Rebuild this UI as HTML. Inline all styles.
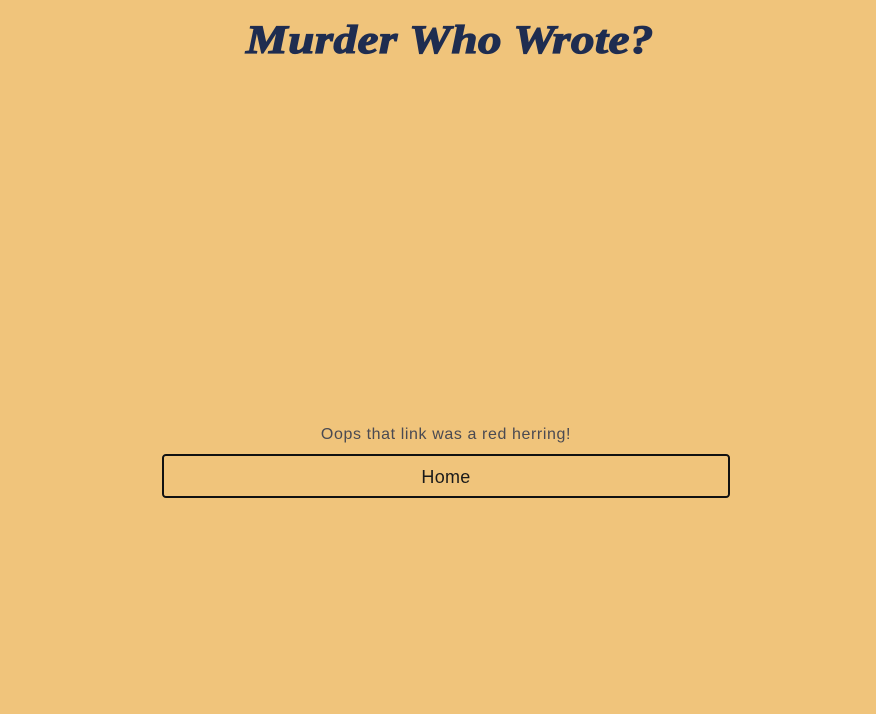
<!DOCTYPE html>
<html><head><style>
html,body{margin:0;padding:0;width:876px;height:714px;background:#f0c47b;overflow:hidden}
h1{position:absolute;left:12px;width:876px;top:15px;margin:0;text-align:center;font-family:"Liberation Serif",serif;font-weight:bold;font-style:italic;font-size:40px;color:#1f2d50;letter-spacing:0.5px;line-height:50px;transform:scaleX(1.17);-webkit-text-stroke:1.3px #1f2d50}
.msg{position:absolute;top:425px;left:8px;width:876px;text-align:center;font-family:"Liberation Sans",sans-serif;font-size:16px;color:#4a4a52;line-height:20px;letter-spacing:0.6px}
.btn{position:absolute;left:162px;top:454px;width:564px;height:40px;border:2px solid #111;border-radius:4px;text-align:center;line-height:42px;font-family:"Liberation Sans",sans-serif;font-size:18px;color:#1a1a1a;letter-spacing:0.3px}
</style></head><body>
<h1>Murder Who Wrote?</h1>
<div class="msg">Oops that link was a red herring!</div>
<div class="btn">Home</div>
</body></html>
